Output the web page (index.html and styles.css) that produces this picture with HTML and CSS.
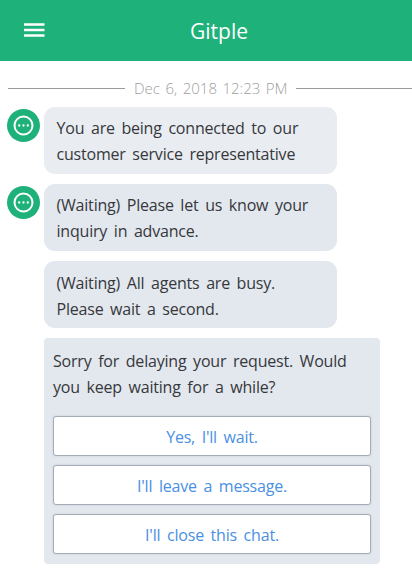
FILE: index.html
```html
<!DOCTYPE html>
<html lang="en">
<head>
<meta charset="utf-8">
<title>Gitple</title>
<link rel="stylesheet" href="styles.css">
</head>
<body>
<svg class="defs" width="0" height="0" aria-hidden="true">
  <symbol id="avatar" viewBox="0 0 33 33">
    <circle cx="16.5" cy="16.5" r="16.5" fill="#1eb179"/>
    <circle cx="16.5" cy="16.5" r="9" fill="none" stroke="#fff" stroke-width="2"/>
    <circle cx="12.2" cy="16.5" r="1.15" fill="#fff"/>
    <circle cx="16.5" cy="16.5" r="1.15" fill="#fff"/>
    <circle cx="20.8" cy="16.5" r="1.15" fill="#fff"/>
  </symbol>
</svg>
<header class="bar">
  <svg class="menu" viewBox="0 0 21 14"><path d="M0 1.5h20.5M0 7h20.5M0 12.5h20.5" stroke="#fff" stroke-width="2.4"/></svg>
  <h1 class="title">Gitple</h1>
</header>
<main class="chat">
  <div class="date"><span class="date-text">Dec 6, 2018 12:23 PM</span></div>
  <div class="row">
    <svg class="avatar"><use href="#avatar"/></svg>
    <p class="bubble first">You are being connected to our<br>customer service representative</p>
  </div>
  <div class="row">
    <svg class="avatar"><use href="#avatar"/></svg>
    <p class="bubble">(Waiting) Please let us know your<br>inquiry in advance.</p>
  </div>
  <div class="row">
    <p class="bubble low">(Waiting) All agents are busy.<br>Please wait a second.</p>
  </div>
  <section class="card">
    <p class="question">Sorry for delaying your request. Would<br>you keep waiting for a while?</p>
    <button class="choice">Yes, I'll wait.</button>
    <button class="choice">I'll leave a message.</button>
    <button class="choice">I'll close this chat.</button>
  </section>
</main>
</body>
</html>
```
FILE: styles.css
```css
* { box-sizing: border-box; }
body {
  margin: 0;
  height: 576px;
  overflow: hidden;
  background: #fff;
  color: #36383c;
  font: 16px/26px "Open Sans", "Noto Sans", sans-serif;
  letter-spacing: -0.2px;
  word-spacing: 2.7px;
}
p, h1 { margin: 0; }
.defs { position: absolute; }
.bar {
  height: 61px;
  display: grid;
  grid-template-columns: 48px 1fr 48px;
  align-items: center;
  background: #1eb179;
}
.menu { width: 21px; height: 14px; margin: 0 0 1px 24px; }
.title {
  padding-left: 26px;
  text-align: center;
  color: #fff;
  font-size: 21px;
  font-weight: 400;
  line-height: 30px;
  letter-spacing: 0;
}
.chat { padding-top: 14px; }
.date {
  display: flex;
  align-items: center;
  gap: 9px;
  height: 26px;
  padding-left: 8px;
  margin-bottom: 6px;
  color: #a0a0a0;
  font-size: 15px;
  font-weight: 300;
  letter-spacing: 0;
  word-spacing: 1.6px;
}
.date::before, .date::after { content: ""; height: 1px; background: #9b9b9b; }
.date::before { width: 117px; }
.date::after { flex: 1; }
.date-text { width: 153px; white-space: nowrap; }
.row { display: flex; height: 67px; padding-left: 44px; margin-bottom: 10px; }
.avatar { width: 33px; height: 33px; margin: 2px 4px 0 -37px; flex: none; }
.bubble {
  width: 293px;
  padding: 8px 12.5px;
  border-radius: 11px;
  background: #e3e7ee;
  white-space: nowrap;
}
.first { background: #e9ecf1; }
.low { padding-top: 9px; }
.card {
  width: 336px;
  height: 226px;
  margin-left: 44px;
  padding: 10px 9px;
  border-radius: 4px;
  background: #e3e7ee;
}
.question { margin-bottom: 16px; white-space: nowrap; }
.choice {
  display: block;
  width: 318px;
  height: 40px;
  margin-bottom: 9px;
  padding: 2px 0 0;
  border: 1px solid #a4acb8;
  border-radius: 3px;
  background: #fff;
  box-shadow: 0 0 2px rgba(120, 130, 145, .3);
  color: #4a90e2;
  font: inherit;
  letter-spacing: inherit;
  word-spacing: inherit;
}
```
